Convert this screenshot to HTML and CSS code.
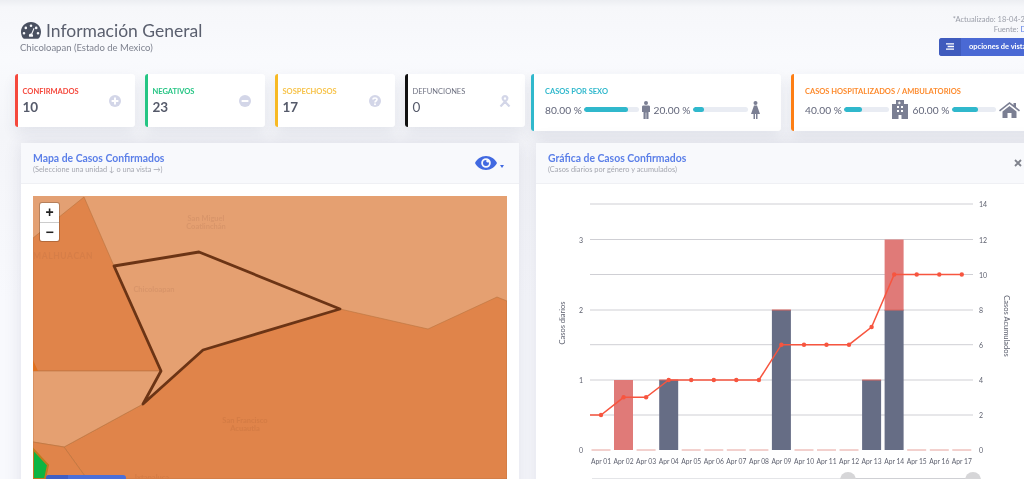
FILE: index.html
```html
<!DOCTYPE html>
<html lang="es">
<head>
<meta charset="utf-8">
<title>Información General</title>
<link rel="stylesheet" href="styles.css">
</head>
<body>
<div class="page">
  <header class="head">
    <div class="head-left">
      <h1 class="title">
        <svg class="title-icon" viewBox="0 0 20 17"><path fill="#495060" fill-rule="evenodd" d="M10 0C4.5 0 0 4.3 0 9.8c0 2.2.7 4.6 1.9 6.3.3.5.8.7 1.3.7h13.6c.5 0 1-.2 1.3-.7 1.2-1.7 1.9-4.1 1.9-6.3C20 4.3 15.5 0 10 0zm0 2.4a1.3 1.3 0 1 1 0 2.6 1.3 1.3 0 0 1 0-2.6zM4.8 4.6a1.3 1.3 0 1 1 0 2.6 1.3 1.3 0 0 1 0-2.6zM3 10a1.3 1.3 0 1 1 0 2.6A1.3 1.3 0 0 1 3 10zm14 0a1.3 1.3 0 1 1 0 2.6 1.3 1.3 0 0 1 0-2.6zm-1.8-5.4a1.3 1.3 0 1 1 0 2.6 1.3 1.3 0 0 1 0-2.6zM12.6 6l.9.5-2.2 5.4c.5.4.8 1 .8 1.6 0 .5-.1.9-.4 1.2H8.3c-.3-.3-.4-.7-.4-1.2 0-1.1.9-2 2-2h.4z"/></svg>
        <span>Información General</span>
      </h1>
      <p class="subtitle">Chicoloapan (Estado de Mexico)</p>
    </div>
    <div class="head-right">
      <p class="meta">*Actualizado: 18-04-2020</p>
      <p class="meta">Fuente: <span class="meta-link">DGEI</span></p>
      <button class="view-btn">
        <span class="view-btn-icon">
          <svg viewBox="0 0 10 8" width="8" height="7"><path fill="#fff" d="M0 0h10v1.6H0zM2 3.2h8v1.6H2zM0 6.4h10V8H0z"/></svg>
        </span>
        <span class="view-btn-text">opciones de vista</span>
      </button>
    </div>
  </header>

  <section class="stats">
    <div class="stats-group small">
      <article class="card small-card c-red">
        <div><h2 class="card-label">Confirmados</h2><div class="card-value">10</div></div>
        <svg class="card-icon" viewBox="0 0 12 12"><circle cx="6" cy="6" r="6" fill="#d3d6e8"/><path fill="#fff" d="M5 2.6h2V5h2.4v2H7v2.4H5V7H2.6V5H5z"/></svg>
      </article>
      <article class="card small-card c-green">
        <div><h2 class="card-label">Negativos</h2><div class="card-value">23</div></div>
        <svg class="card-icon" viewBox="0 0 12 12"><circle cx="6" cy="6" r="6" fill="#d3d6e8"/><path fill="#fff" d="M2.6 5h6.8v2H2.6z"/></svg>
      </article>
      <article class="card small-card c-yellow">
        <div><h2 class="card-label">Sospechosos</h2><div class="card-value">17</div></div>
        <svg class="card-icon" viewBox="0 0 12 12"><circle cx="6" cy="6" r="6" fill="#d3d6e8"/><path fill="none" stroke="#fff" stroke-width="1.6" d="M4 4.6C4 3.4 5 3 6 3s2 .6 2 1.6C8 6 6 6 6 7.4"/><circle cx="6" cy="9.2" r="1" fill="#fff"/></svg>
      </article>
      <article class="card small-card c-black">
        <div><h2 class="card-label">Defunciones</h2><div class="card-value">0</div></div>
        <svg class="card-icon" viewBox="0 0 12 12"><path fill="none" stroke="#d3d6e8" stroke-width="2.200" d="M1.500 11.500 7.600 5C8.400 4 8.500 3.300 8.200 2.500 7.800 1.500 7 1.100 6 1.100S4.200 1.500 3.800 2.500C3.500 3.300 3.600 4 4.400 5l6.100 6.500"/></svg>
      </article>
    </div>
    <div class="stats-group">
      <article class="card wide-card c-cyan">
        <h2 class="card-label">Casos por sexo</h2>
        <div class="meters">
          <span class="pct">80.00 %</span>
          <span class="track"><span class="fill" style="width:80%"></span></span>
          <svg class="male" viewBox="0 0 8 18"><circle cx="4" cy="2" r="2" fill="#7b7f93"/><path fill="#7b7f93" d="M1.300 4.500h5.400c.7 0 1.300.6 1.300 1.300v5.200H6.500V18H4.300v-6.500h-.6V18H1.500v-7H0V5.800c0-.7.600-1.300 1.300-1.300z"/></svg>
          <span class="pct">20.00 %</span>
          <span class="track"><span class="fill" style="width:20%"></span></span>
          <svg class="female" viewBox="0 0 9 18"><circle cx="4.500" cy="2" r="2" fill="#7b7f93"/><path fill="#7b7f93" d="M3 4.500h3l3 8.500H6.500v5H5v-5H4v5H2.500v-5H0z"/></svg>
        </div>
      </article>
      <article class="card wide-card c-orange">
        <h2 class="card-label">Casos hospitalizados / ambulatorios</h2>
        <div class="meters">
          <span class="pct">40.00 %</span>
          <span class="track"><span class="fill" style="width:40%"></span></span>
          <svg class="building" viewBox="0 0 16 19"><path fill="#7b7f93" fill-rule="evenodd" d="M0 4h4V0h8v4h4v15H9.500v-4h-3v4H0zM5 6v2h2V6zm4 0v2h2V6zM5 10v2h2v-2zm4 0v2h2v-2zM6.800 1.500v.9h-.9v1h.9v.9h1v-.9h.9v-1h-.9v-.9z"/></svg>
          <span class="pct">60.00 %</span>
          <span class="track"><span class="fill" style="width:60%"></span></span>
          <svg class="home" viewBox="0 0 21 16"><path fill="#7b7f93" d="M10.500 0 0 8.300l1 1.200 9.500-7.500L20 9.500l1-1.200-4-3.200V1h-2.500v2.100zM3.500 9.500 10.500 4l7 5.500V16h-5v-5h-4v5h-5z"/></svg>
        </div>
      </article>
    </div>
  </section>

  <section class="panels">
    <article class="panel map-panel">
      <header class="panel-head">
        <div>
          <h2 class="panel-title">Mapa de Casos Confirmados</h2>
          <p class="panel-sub">(Seleccione una unidad ↓ o una vista →)</p>
        </div>
        <div class="eye-menu">
          <svg class="eye" viewBox="0 0 22 14"><path fill="#4169e1" fill-rule="evenodd" d="M11 0C6 0 2 3 0 7c2 4 6 7 11 7s9-3 11-7c-2-4-6-7-11-7zm0 2.200a4.800 4.800 0 1 1 0 9.600 4.800 4.800 0 0 1 0-9.600zm0 1.800a3 3 0 1 0 3 3c0-.3 0-.6-.1-.8-.3.3-.6.4-1 .4a1.500 1.500 0 0 1-1.300-2.500z"/></svg>
          <span class="caret"></span>
        </div>
      </header>
      <div class="panel-body map-body">
        <div class="map">
          <svg class="map-svg" viewBox="33 196 474 283">
            <rect x="33" y="196" width="474" height="283" fill="#e5a071"/>
            <path d="M33 196H84L33 238z" fill="#e3a073"/>
            <path d="M33 238 84 197 114 266 161 371H33z" fill="#e0844a" stroke="#b8743f" stroke-width=".6"/>
            <path d="M143 404 203 350 340 309 428 329 497 297 507 301V479H87L64 447z" fill="#e0844a" stroke="#b8743f" stroke-width=".6"/>
            <path d="M33 371H161L143 404 64 447 33 442z" fill="#e5a071" stroke="#b8743f" stroke-width=".6"/>
            <path d="M33 442 64 447 87 479H33z" fill="#e0844a" stroke="#b8743f" stroke-width=".6"/>
            <path d="M33 360 38 371H33z" fill="#e0701f"/>
            <path d="M33 449 48 465 45 479H33z" fill="#0db542" stroke="#c07a20" stroke-width="2"/>
            <path d="M114 266 199 252 340 309 203 350 143 404 161 371z" fill="none" stroke="#6b3415" stroke-width="2.800" stroke-linejoin="round"/>
            <g class="map-label">
              <text x="206" y="221" text-anchor="middle">San Miguel</text>
              <text x="206" y="229" text-anchor="middle">Coatlinchán</text>
              <text x="33" y="259" class="map-caps">MALHUACAN</text>
              <text x="154" y="292" text-anchor="middle">Chicoloapan</text>
              <text x="245" y="423" text-anchor="middle" class="map-dark">San Francisco</text>
              <text x="245" y="431" text-anchor="middle" class="map-dark">Acuautla</text>
              <text x="152" y="480" text-anchor="middle" class="map-dark">Ixtapaluca</text>
            </g>
          </svg>
          <div class="zoom-ctl">
            <span class="zoom-btn">+</span>
            <span class="zoom-btn">−</span>
          </div>
          <div class="map-tab"><span class="map-tab-dark"></span></div>
        </div>
      </div>
    </article>

    <article class="panel chart-panel">
      <header class="panel-head">
        <div>
          <h2 class="panel-title">Gráfica de Casos Confirmados</h2>
          <p class="panel-sub">(Casos diarios por género y acumulados)</p>
        </div>
        <svg class="close" viewBox="0 0 8 8"><path stroke="#7f828c" stroke-width="1.800" d="M1 1l6 6M7 1 1 7"/></svg>
      </header>
      <div class="panel-body">
        <svg class="chart" viewBox="536 183 488 296">
          <g class="grid">
            <path d="M590 204H973M590 239.500H973M590 274.500H973M590 310H973M590 344.700H973M590 380H973M590 415H973"/>
          </g>
          <g class="zero">
            <path d="M591.500 450h19M636.600 450h19M681.700 450h19M704.300 450h19M726.800 450h19M749.400 450h19M794.500 450h19M817 450h19M839.500 450h19M907.200 450h19M929.800 450h19M952.300 450h19"/>
          </g>
          <rect class="bar-r" x="614" y="380" width="19" height="70"/>
          <rect class="bar-n" x="659.200" y="380" width="19" height="70"/>
          <rect class="bar-n" x="771.900" y="310" width="19" height="140"/>
          <rect class="bar-n" x="862.100" y="380" width="19" height="70"/>
          <rect class="bar-n" x="884.600" y="310" width="19" height="140"/>
          <rect class="bar-r" x="884.600" y="239.500" width="19" height="70.500"/>
          <path class="bar-cap" d="M659.200 380h19M771.900 310h19M862.100 380h19M884.600 310h19"/>
          <polyline class="line" points="590,415 601,415 623.600,397.300 646.100,397.300 668.700,380 691.200,380 713.800,380 736.300,380 758.900,380 781.400,344.700 804,344.700 826.500,344.700 849,344.700 871.600,327 894.200,274.500 916.700,274.500 939.300,274.500 961.800,274.500"/>
          <g class="dots">
            <circle cx="601" cy="415" r="2.200"/><circle cx="623.600" cy="397.300" r="2.200"/><circle cx="646.100" cy="397.300" r="2.200"/><circle cx="668.700" cy="380" r="2.200"/><circle cx="691.200" cy="380" r="2.200"/><circle cx="713.800" cy="380" r="2.200"/><circle cx="736.300" cy="380" r="2.200"/><circle cx="758.900" cy="380" r="2.200"/><circle cx="781.400" cy="344.700" r="2.200"/><circle cx="804" cy="344.700" r="2.200"/><circle cx="826.500" cy="344.700" r="2.200"/><circle cx="849" cy="344.700" r="2.200"/><circle cx="871.600" cy="327" r="2.200"/><circle cx="894.200" cy="274.500" r="2.200"/><circle cx="916.700" cy="274.500" r="2.200"/><circle cx="939.300" cy="274.500" r="2.200"/><circle cx="961.800" cy="274.500" r="2.200"/>
          </g>
          <g class="tick-l">
            <text x="583" y="242.500">3</text><text x="583" y="313">2</text><text x="583" y="383">1</text><text x="583" y="453">0</text>
          </g>
          <g class="tick-r">
            <text x="979" y="207">14</text><text x="979" y="242.500">12</text><text x="979" y="277.500">10</text><text x="979" y="313">8</text><text x="979" y="347.700">6</text><text x="979" y="383">4</text><text x="979" y="418">2</text><text x="979" y="453">0</text>
          </g>
          <g class="tick-x">
            <text x="601" y="463.500">Apr 01</text><text x="623.600" y="463.500">Apr 02</text><text x="646.100" y="463.500">Apr 03</text><text x="668.700" y="463.500">Apr 04</text><text x="691.200" y="463.500">Apr 05</text><text x="713.800" y="463.500">Apr 06</text><text x="736.300" y="463.500">Apr 07</text><text x="758.900" y="463.500">Apr 08</text><text x="781.400" y="463.500">Apr 09</text><text x="804" y="463.500">Apr 10</text><text x="826.500" y="463.500">Apr 11</text><text x="849" y="463.500">Apr 12</text><text x="871.600" y="463.500">Apr 13</text><text x="894.200" y="463.500">Apr 14</text><text x="916.700" y="463.500">Apr 15</text><text x="939.300" y="463.500">Apr 16</text><text x="961.800" y="463.500">Apr 17</text>
          </g>
          <text class="axis-title" transform="translate(564.500 323) rotate(-90)">Casos diarios</text>
          <text class="axis-title" transform="translate(1004 326) rotate(90)">Casos Acumulados</text>
          <path class="slider-track" d="M592 478.500H973"/>
          <path class="slider-range" d="M848 478.500H973"/>
          <circle class="slider-knob" cx="848" cy="480" r="8"/>
          <circle class="slider-knob" cx="973" cy="480" r="8"/>
        </svg>
      </div>
    </article>
  </section>
</div>
</body>
</html>
```
FILE: styles.css
```css
html, body {
  margin: 0;
  height: 100%;
  overflow: hidden;
}
body {
  background: #f1f4f6;
  font-family: "Lato", "Noto Sans", sans-serif;
  color: #495057;
}
p, h1, h2 { margin: 0; font-weight: normal; }

.page {
  width: 1100px;
  height: 479px;
  overflow: hidden;
  filter: blur(.35px);
  background: linear-gradient(180deg, #eceef2 0, #f6f7fa 7px, #f9fafd 60px, #f4f5f9 135px, #f8f9fd 300px);
}

/* header */
.head {
  display: flex;
  justify-content: space-between;
  align-items: flex-start;
  height: 74px;
  padding-left: 20px;
  box-sizing: border-box;
}
.head-left { padding-top: 19px; }
.title {
  display: flex;
  align-items: center;
  gap: 5px;
  height: 24px;
  font-size: 17.500px;
  line-height: 24px;
  color: #5a5f6e;
}
.title-icon { width: 20px; height: 17px; margin-left: 1px; margin-top: -2px; }
.subtitle {
  margin-top: -2px;
  font-size: 9.500px;
  line-height: 13px;
  color: #7e828f;
}
.head-right {
  width: 161px;
  padding-top: 15px;
  text-align: left;
}
.meta {
  height: 10px;
  font-size: 7.500px;
  line-height: 10px;
  color: #9a9da8;
  text-align: right;
  padding-right: 62px;
}
.meta-link { color: #5b7fe8; }
.view-btn {
  display: flex;
  align-items: stretch;
  width: 130px;
  height: 18px;
  margin: 3px 0 0 0;
  padding: 0;
  border: 0;
  border-radius: 3px;
  overflow: hidden;
  background: #4a69d4;
  font: inherit;
  color: #fff;
}
.view-btn-icon {
  display: flex;
  align-items: center;
  justify-content: center;
  width: 22px;
  padding-bottom: 2px;
  box-sizing: border-box;
  background: #3f5bbd;
}
.view-btn-text {
  padding-left: 8px;
  font-size: 7.500px;
  font-weight: 700;
  line-height: 18px;
}

/* stat cards */
.stats {
  display: flex;
  align-items: flex-start;
  gap: 6px;
  padding-left: 15px;
}
.stats-group { display: flex; gap: 10px; align-items: flex-start; }
.stats-group.small { gap: 10.500px; }
.card {
  box-sizing: border-box;
  background: #fff;
  border-left: 3px solid;
  border-radius: 3px;
  box-shadow: 0 6px 14px rgba(60, 65, 100, .09);
}
.small-card {
  display: flex;
  justify-content: space-between;
  align-items: flex-start;
  width: 119.500px;
  height: 53px;
  padding: 13px 13.500px 0 4.500px;
}
.wide-card {
  width: 250px;
  height: 57px;
  padding: 13px 0 0 11.500px;
}
.c-red { border-color: #f5483c; }
.c-red .card-label { color: #f5483c; }
.c-green { border-color: #25c584; }
.c-green .card-label { color: #25c584; }
.c-yellow { border-color: #f7b924; }
.c-yellow .card-label { color: #f7c34a; }
.c-black { border-color: #111; }
.c-black .card-label { color: #6d7080; font-weight: 400; }
.c-cyan { border-color: #30b8cc; }
.c-cyan .card-label { color: #30b8cc; }
.c-orange { border-color: #fd7e14; }
.c-orange .card-label { color: #fd8b2e; }
.card-label {
  font-size: 7.500px;
  line-height: 10px;
  font-weight: 700;
  text-transform: uppercase;
  white-space: nowrap;
}
.card-value {
  margin-top: 1px;
  font-size: 13.500px;
  line-height: 18px;
  font-weight: 700;
  color: #555a6a;
}
.c-black .card-value { font-weight: 400; }
.card-icon { width: 12px; height: 12px; margin-top: 8px; }

.meters {
  display: flex;
  align-items: center;
  height: 25px;
}
.pct {
  flex: none;
  width: 36px;
  font-size: 10.200px;
  color: #62667a;
  white-space: nowrap;
}
.track {
  display: block;
  flex: none;
  width: 55px;
  height: 5px;
  margin-left: 3px;
  border-radius: 3px;
  background: #e9ecf3;
  overflow: hidden;
}
.c-orange .track { width: 44.500px; }
.fill {
  display: block;
  height: 100%;
  border-radius: 3px;
  background: #30b8cc;
}
.male { flex: none; width: 8px; height: 18px; margin: 0 3.500px 0 3px; }
.female { flex: none; width: 9px; height: 18px; margin-left: 3px; }
.building { flex: none; width: 16px; height: 19px; margin: 0 5px 0 3px; }
.home { flex: none; width: 21px; height: 16px; margin-left: 3px; }

/* panels */
.panels {
  display: flex;
  gap: 17px;
  align-items: flex-start;
  margin-top: 12px;
  padding-left: 21px;
}
.panel {
  background: #fff;
  box-shadow: 0 0 16px rgba(60, 65, 100, .13);
  height: 400px;
}
.map-panel { width: 498px; }
.chart-panel { width: 520px; }
.panel-head {
  box-sizing: border-box;
  display: flex;
  justify-content: space-between;
  align-items: center;
  height: 40px;
  padding: 0 12px 1px;
  background: #f8f9fc;
  box-shadow: 0 1px 0 #eff0f4;
}
.chart-panel .panel-head { padding-right: 34px; }
.panel-title {
  font-size: 10.400px;
  line-height: 13px;
  font-weight: 700;
  color: #5b7fe8;
}
.panel-sub {
  font-size: 7.400px;
  line-height: 9px;
  color: #a5a7b0;
}
.eye-menu { display: flex; align-items: flex-end; gap: 3px; margin-right: 3px; }
.eye { width: 22px; height: 14px; display: block; }
.caret {
  width: 0;
  height: 0;
  margin-bottom: 2px;
  border: 2px solid transparent;
  border-top: 3px solid #4169e1;
  border-bottom: 0;
}
.close { width: 8px; height: 8px; }

.map-body { padding: 13px 12px 0; }
.map {
  position: relative;
  height: 283px;
  overflow: hidden;
}
.map-svg { display: block; width: 474px; height: 283px; }
.map-label text {
  font-size: 7.500px;
  fill: #d8956a;
  font-weight: 700;
}
.map-label .map-caps { font-size: 8.500px; fill: #d67e48; letter-spacing: .6px; }
.map-label .map-dark { fill: #d47c45; }
.zoom-ctl {
  position: absolute;
  left: 7px;
  top: 7px;
  display: flex;
  flex-direction: column;
  width: 19px;
  background: #fff;
  border-radius: 2px;
  box-shadow: 0 0 0 1px rgba(0, 0, 0, .2);
}
.zoom-btn {
  height: 18.500px;
  font: 700 14px/18px "Liberation Sans", sans-serif;
  color: #222;
  text-align: center;
}
.zoom-btn + .zoom-btn { border-top: 1px solid #ccc; }
.map-tab {
  position: absolute;
  left: 13px;
  top: 279px;
  width: 80px;
  height: 10px;
  background: #4a6fd8;
  border-radius: 3px 3px 0 0;
  overflow: hidden;
}
.map-tab-dark { display: block; width: 22px; height: 100%; background: #3f5fc4; }

.chart { display: block; width: 488px; height: 296px; }
.grid path { stroke: #cfcfd4; stroke-width: 1; fill: none; }
.zero path { stroke: #e6a29c; stroke-width: 1; fill: none; }
.bar-r { fill: #e07a78; }
.bar-n { fill: #666d85; }
.bar-cap { stroke: #d9655f; stroke-width: 1; fill: none; }
.line { fill: none; stroke: #f7553f; stroke-width: 1.500; }
.dots circle { fill: #f7553f; }
.tick-l text, .tick-r text, .axis-title {
  font-size: 7px;
  fill: #5f6270;
}
.tick-x text {
  font-size: 6.700px;
  fill: #5f6270;
  text-anchor: middle;
}
.tick-l text { text-anchor: end; }
.axis-title { text-anchor: middle; font-size: 7.500px; }
.slider-track { stroke: #e4e5e8; stroke-width: 1; }
.slider-range { stroke: #cfd0d4; stroke-width: 1; }
.slider-knob { fill: #d6d6d8; }
```
